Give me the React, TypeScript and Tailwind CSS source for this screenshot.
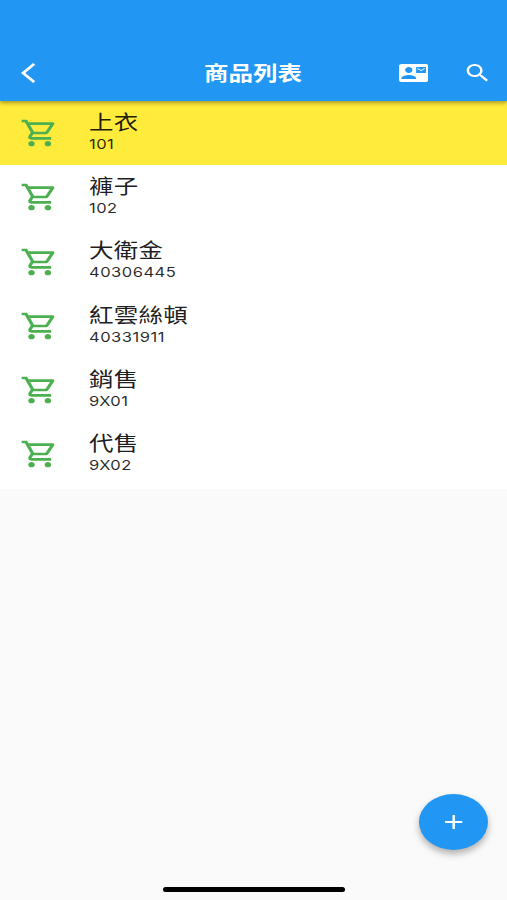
import { useState } from "react";

type Product = {
  name: string;
  code: string;
};

const products: Product[] = [
  { name: "上衣", code: "101" },
  { name: "褲子", code: "102" },
  { name: "大衛金", code: "40306445" },
  { name: "紅雲絲頓", code: "40331911" },
  { name: "銷售", code: "9X01" },
  { name: "代售", code: "9X02" },
];

const icons = {
  back: "M11.67 3.87L9.9 2.1 0 12l9.9 9.9 1.77-1.77L3.54 12z",
  contact:
    "M21 8V7l-3 2-3-2v1l3 2 3-2zm1-5H2C.9 3 0 3.9 0 5v14c0 1.1.9 2 2 2h20c1.1 0 1.99-.9 1.99-2L24 5c0-1.1-.9-2-2-2zM8 6c1.66 0 3 1.34 3 3s-1.34 3-3 3-3-1.34-3-3 1.34-3 3-3zm6 12H2v-1c0-2 4-3.1 6-3.1s6 1.1 6 3.1v1zm8-6h-8V6h8v6z",
  search:
    "M15.5 14h-.79l-.28-.27C15.41 12.59 16 11.11 16 9.5 16 5.91 13.09 3 9.5 3S3 5.91 3 9.5 5.91 16 9.5 16c1.61 0 3.09-.59 4.23-1.57l.27.28v.79l5 4.99L20.49 19l-4.99-5zm-6 0C7.01 14 5 11.99 5 9.5S7.01 5 9.5 5 14 7.01 14 9.5 11.99 14 9.5 14z",
  cart: "M15.55 13c.75 0 1.41-.41 1.75-1.03l3.58-6.49c.37-.66-.11-1.48-.87-1.48H5.21l-.94-2H1v2h2l3.6 7.59-1.35 2.44C4.52 15.37 5.48 17 7 17h12v-2H7l1.1-2h7.45zM6.16 6h12.15l-2.76 5H8.53L6.16 6zM7 18c-1.1 0-1.99.9-1.99 2S5.9 22 7 22s2-.9 2-2-.9-2-2-2zm10 0c-1.1 0-1.99.9-1.99 2s.89 2 1.99 2 2-.9 2-2-.9-2-2-2z",
  add: "M19 13h-6v6h-2v-6H5v-2h6V5h2v6h6v2z",
};

function Icon({ name, className }: { name: keyof typeof icons; className: string }) {
  return (
    <svg viewBox="0 0 24 24" preserveAspectRatio="none" fill="currentColor" className={className}>
      <path d={icons[name]} />
    </svg>
  );
}

export default function App() {
  const [selected, setSelected] = useState(0);

  return (
    <div className="relative flex h-[900px] w-[507px] flex-col overflow-hidden bg-[#fafafa] font-[Inter,'Noto_Sans_CJK_TC',sans-serif]">
      {/* App bar */}
      <header className="z-10 flex h-[101px] shrink-0 items-end bg-[#2196f3] text-white shadow-[0_2px_4px_rgba(0,0,0,0.35)]">
        <div className="grid h-14 w-full grid-cols-[1fr_auto_1fr] items-center pr-[14.5px] pl-[21px]">
          <button aria-label="返回" className="w-fit">
            <Icon name="back" className="h-6 w-[29.4px]" />
          </button>
          <h1 className="mr-[8px] scale-x-[1.224] pt-0.5 text-[20px] leading-none font-bold">商品列表</h1>
          <div className="flex justify-end gap-[35px]">
            <button aria-label="聯絡人">
              <Icon name="contact" className="h-6 w-[29.4px]" />
            </button>
            <button aria-label="搜尋">
              <Icon name="search" className="h-6 w-[29.4px]" />
            </button>
          </div>
        </div>
      </header>

      {/* Product list */}
      <ul className="bg-white pb-[2px]">
        {products.map((item, idx) => (
          <li
            key={item.code}
            onClick={() => setSelected(idx)}
            className={`flex h-[64.25px] items-center pl-5 ${idx === selected ? "bg-[#ffeb3b]" : ""}`}
          >
            <Icon name="cart" className="mr-[30px] h-8 w-[39.4px] text-[#4caf50]" />
            <div className="origin-left scale-x-[1.224] pb-[2.5px]">
              <p className="text-[20px] leading-6 tracking-[0.2px] text-black/90">{item.name}</p>
              <p className="text-[13.5px] leading-[18px] tracking-[0.4px] text-black/85">{item.code}</p>
            </div>
          </li>
        ))}
      </ul>

      <button
        aria-label="新增"
        className="absolute right-[19px] bottom-[50px] flex h-14 w-[69px] items-center justify-center rounded-[50%] bg-[#2196f3] text-white shadow-[0_4px_7px_rgba(0,0,0,0.3)]"
      >
        <Icon name="add" className="h-6 w-[29.4px]" />
      </button>

      {/* Home indicator */}
      <div className="absolute bottom-2 left-[163px] h-[5px] w-[182px] rounded-full bg-black" />
    </div>
  );
}
